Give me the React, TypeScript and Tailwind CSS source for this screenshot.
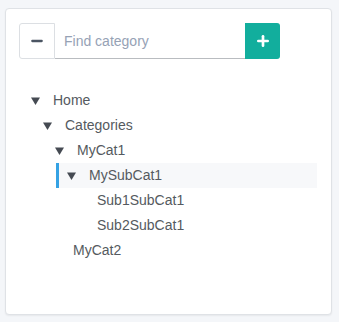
import { Minus, Plus } from "lucide-react";

type Node = {
  label: string;
  level: number;
  open?: boolean;
  active?: boolean;
};

const TREE: Node[] = [
  { label: "Home", level: 0, open: true },
  { label: "Categories", level: 1, open: true },
  { label: "MyCat1", level: 2, open: true },
  { label: "MySubCat1", level: 3, open: true, active: true },
  { label: "Sub1SubCat1", level: 4 },
  { label: "Sub2SubCat1", level: 4 },
  { label: "MyCat2", level: 2 },
];

const INDENT = ["pl-[12px]", "pl-[24px]", "pl-[36px]", "pl-[48px]", "pl-[60px]"];

function Caret() {
  return (
    <span className="flex w-[22px] items-center">
      <svg width="9" height="8" viewBox="0 0 9 8" className="text-[#454a52]">
        <path d="M0 0.5 H9 L4.5 8 Z" fill="currentColor" />
      </svg>
    </span>
  );
}

function TreeRow({ node }: { node: Node }) {
  const rowCls = node.active
    ? "ml-[37px] border-l-[3px] border-[#35a2e4] bg-[#f7f8fa] pl-[8px]"
    : INDENT[node.level];
  return (
    <li className={`flex h-[25px] items-center ${rowCls}`}>
      {node.open ? (
        <>
          <Caret />
          <span>{node.label}</span>
        </>
      ) : (
        <span className="pl-[18px]">{node.label}</span>
      )}
    </li>
  );
}

export default function App() {
  return (
    <div className="h-[322px] w-[339px] bg-[#f4f6f9] pl-[5px] pt-[8px] font-['Liberation_Sans',Arial,sans-serif]">
      <div className="h-[307px] w-[327px] rounded-[4px] border border-[#dfe2e6] bg-white pl-[13px] pr-[14px] pt-[14px] shadow-[0_1px_2px_rgba(0,0,0,0.06)]">
        <div className="flex h-[36px] w-[261px]">
          <button className="flex w-[36px] shrink-0 items-center justify-center rounded-l-[3px] border border-[#dcdfe3] bg-white">
            <Minus size={16} strokeWidth={3.5} className="text-[#4b5563]" />
          </button>
          <input
            className="h-full min-w-0 flex-1 border-b border-[#b9bcc0] px-[9px] text-[14px] text-[#555] outline-none placeholder:text-[#96a2b5]"
            placeholder="Find category"
          />
          <button className="flex w-[35px] shrink-0 items-center justify-center rounded-r-[3px] bg-[#12ae9d]">
            <Plus size={16} strokeWidth={4} className="text-white" />
          </button>
        </div>
        <ul className="mt-[29px] text-[14px] text-[#555a60]">
          {TREE.map((node) => (
            <TreeRow key={node.label} node={node} />
          ))}
        </ul>
      </div>
    </div>
  );
}
